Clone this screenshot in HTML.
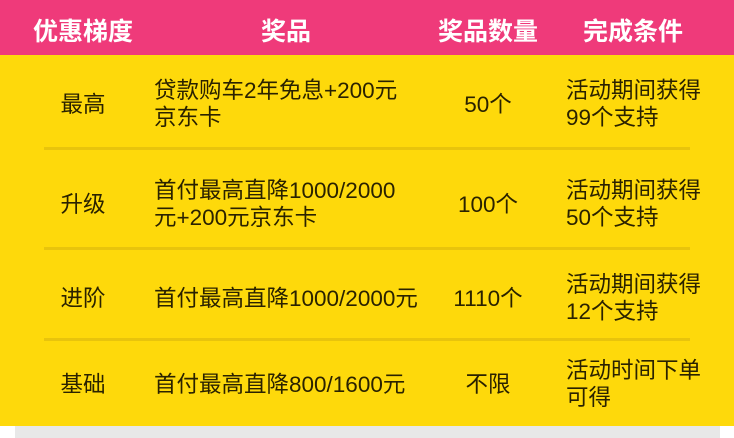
<!DOCTYPE html>
<html><head><meta charset="utf-8"><style>
body{margin:0;width:734px;height:438px;background:#fff;position:relative;overflow:hidden;font-family:"Liberation Sans","Noto Sans CJK SC",sans-serif}
.hd{position:absolute;left:0;top:0;width:734px;height:55px;background:#ef3a7a;color:#fff;font-size:25px;font-weight:bold}
.hd span{position:absolute;top:12px;transform:translateX(-50%);white-space:nowrap}
.bd{position:absolute;left:0;top:55px;width:734px;height:371px;background:#fed90b;color:#2a2200;font-size:22.5px;line-height:27px}
.gr{position:absolute;left:15px;top:426px;width:705px;height:12px;background:#e8e8e8}
.ln{position:absolute;left:44px;width:646px;height:3px;background:#e8c40c}
.t{position:absolute;white-space:nowrap}
.c{transform:translateX(-50%)}
</style></head><body>
<div class="hd"><span style="left:83px">优惠梯度</span><span style="left:286px">奖品</span><span style="left:488px">奖品数量</span><span style="left:633px">完成条件</span></div>
<div class="bd">
<div class="ln" style="top:92px"></div><div class="ln" style="top:192px"></div><div class="ln" style="top:283px"></div>
<div class="t c" style="left:83px;top:36px">最高</div>
<div class="t" style="left:154px;top:22px">贷款购车2年免息+200元<br>京东卡</div>
<div class="t c" style="left:488px;top:36px">50个</div>
<div class="t" style="left:566px;top:22px">活动期间获得<br>99个支持</div>
<div class="t c" style="left:83px;top:136px">升级</div>
<div class="t" style="left:154px;top:122px">首付最高直降1000/2000<br>元+200元京东卡</div>
<div class="t c" style="left:488px;top:136px">100个</div>
<div class="t" style="left:566px;top:122px">活动期间获得<br>50个支持</div>
<div class="t c" style="left:83px;top:230px">进阶</div>
<div class="t" style="left:154px;top:230px">首付最高直降1000/2000元</div>
<div class="t c" style="left:488px;top:230px">1110个</div>
<div class="t" style="left:566px;top:216px">活动期间获得<br>12个支持</div>
<div class="t c" style="left:83px;top:316px">基础</div>
<div class="t" style="left:154px;top:316px">首付最高直降800/1600元</div>
<div class="t c" style="left:488px;top:316px">不限</div>
<div class="t" style="left:566px;top:302px">活动时间下单<br>可得</div>
</div>
<div class="gr"></div>
</body></html>
